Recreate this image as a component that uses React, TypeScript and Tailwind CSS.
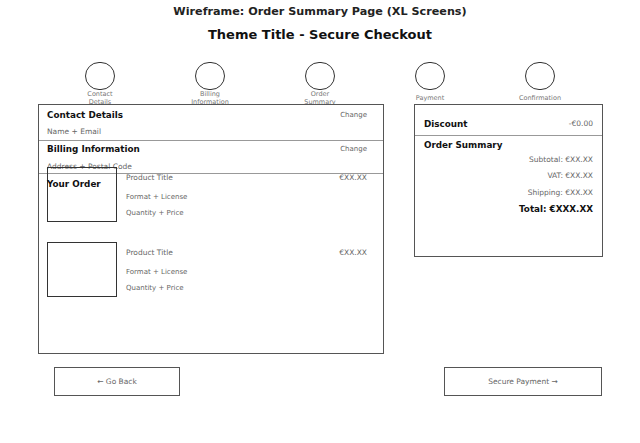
const steps = [
  ['Contact', 'Details'],
  ['Billing', 'Information'],
  ['Order', 'Summary'],
  ['Payment'],
  ['Confirmation'],
];

const products = [1, 2];

function Step({ lines }: { lines: string[] }) {
  return (
    <div className="w-[110px] flex flex-col items-center">
      <div className="w-[30px] h-[28px] rounded-full border border-[#333]" />
      <div className="h-[16px] flex flex-col justify-center items-center text-[6.5px] leading-[8px] text-[#777]">
        {lines.map((l) => (
          <span key={l}>{l}</span>
        ))}
      </div>
    </div>
  );
}

function ProductRow() {
  return (
    <div className="flex pl-[8px] pr-[16px] h-[55px]">
      <div className="w-[70px] h-[55px] border border-[#333] shrink-0" />
      <div className="ml-[9px] flex-1 pt-[5px] text-[7.5px] text-[#666]">
        <div className="flex justify-between leading-[12px]">
          <span>Product Title</span>
          <span>€XX.XX</span>
        </div>
        <div className="mt-[7px] leading-[12px] text-[7px]">Format + License</div>
        <div className="mt-[4px] leading-[12px] text-[7px]">Quantity + Price</div>
      </div>
    </div>
  );
}

export default function App() {
  return (
    <div className="w-[640px] h-[443px] bg-white font-['DejaVu_Sans',sans-serif] text-[#111] overflow-hidden">
      <h1 className="pt-[4px] text-center text-[11.2px] leading-[16px] font-bold text-[#222]">
        Wireframe: Order Summary Page (XL Screens)
      </h1>
      <h2 className="mt-[5px] text-center text-[13px] leading-[20px] font-bold text-[#111]">
        Theme Title - Secure Checkout
      </h2>

      <div className="mt-[17px] flex justify-center">
        {steps.map((s) => (
          <Step key={s[0]} lines={s} />
        ))}
      </div>

      <div className="mt-[-2px] flex gap-[30px] pl-[38px]">
        <div className="relative w-[346px] h-[250px] border border-[#555] bg-white">
          <div className="pl-[8px] pr-[16px] pt-[3px] pb-[2px] border-b border-[#999]">
            <div className="flex justify-between items-center leading-[14px]">
              <span className="text-[8.8px] font-bold">Contact Details</span>
              <span className="text-[7px] text-[#666]">Change</span>
            </div>
            <div className="mt-[4px] leading-[12px] text-[7.5px] text-[#666]">Name + Email</div>
          </div>
          <div className="pl-[8px] pr-[16px] pt-[1px] border-b border-[#999]">
            <div className="flex justify-between items-center leading-[14px]">
              <span className="text-[8.8px] font-bold">Billing Information</span>
              <span className="text-[7px] text-[#666]">Change</span>
            </div>
            <div className="mt-[5px] leading-[12px] text-[7.5px] text-[#666]">Address + Postal Code</div>
          </div>
          <div className="relative mt-[-7px] flex flex-col gap-[20px]">
            {products.map((p) => (
              <ProductRow key={p} />
            ))}
            <span className="absolute left-[8px] top-[10px] leading-[14px] text-[8.8px] font-bold">Your Order</span>
          </div>
        </div>

        <div className="relative w-[189px] h-[153px] border border-[#555] bg-white">
          <div className="px-[9px] pt-[12px] pb-[4px] border-b border-[#999] flex justify-between items-center leading-[14px]">
            <span className="text-[8.8px] font-bold">Discount</span>
            <span className="text-[7.5px] text-[#666]">-€0.00</span>
          </div>
          <div className="px-[9px] pt-[2px] text-right">
            <div className="text-left leading-[14px] text-[8.8px] font-bold">Order Summary</div>
            <div className="mt-[2px] leading-[12px] text-[7.5px] text-[#666]">Subtotal: €XX.XX</div>
            <div className="mt-[4px] leading-[12px] text-[7.5px] text-[#666]">VAT: €XX.XX</div>
            <div className="mt-[5px] leading-[12px] text-[7.5px] text-[#666]">Shipping: €XX.XX</div>
            <div className="mt-[3px] leading-[14px] text-[8.8px] font-bold">Total: €XXX.XX</div>
          </div>
        </div>
      </div>

      <div className="mt-[13px] flex justify-between pl-[54px] pr-[38px]">
        <button className="w-[126px] h-[29px] border border-[#555] text-[7.5px] text-[#666]">← Go Back</button>
        <button className="w-[158px] h-[29px] border border-[#555] text-[7.5px] text-[#666]">Secure Payment →</button>
      </div>
    </div>
  );
}
